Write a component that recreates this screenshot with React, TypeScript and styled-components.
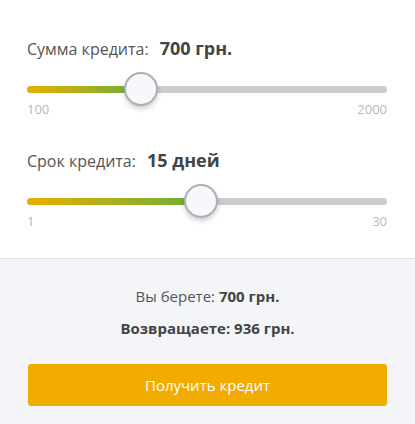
import React from "react";
import styled, { createGlobalStyle } from "styled-components";

const Global = createGlobalStyle`
  html, body { margin: 0; padding: 0; background: #fff; }
  body { font-family: "Open Sans", "Liberation Sans", sans-serif; }
`;

const Page = styled.div`
  width: 415px;
  height: 424px;
  display: flex;
  flex-direction: column;
`;

const Top = styled.div`
  padding: 36px 28px 29px 27px;
  display: flex;
  flex-direction: column;
  border-bottom: 1px solid #e2e4e8;
`;

const Section = styled.div<{ $gap?: number }>`
  display: flex;
  flex-direction: column;
  margin-top: ${(p) => p.$gap ?? 0}px;
`;

const LabelRow = styled.div`
  display: flex;
  align-items: baseline;
  height: 24px;
  line-height: 24px;
`;

const Label = styled.span`
  font-size: 16px;
  color: #555;
  margin-right: 11px;
`;

const Value = styled.span`
  font-size: 18px;
  font-weight: 700;
  color: #444;
`;

const SliderBox = styled.div<{ $top: number }>`
  position: relative;
  height: 24px;
  margin-top: ${(p) => p.$top}px;
  display: flex;
  align-items: center;
`;

const Track = styled.div`
  width: 100%;
  height: 7px;
  border-radius: 4px;
  background: #cccccc;
  position: relative;
`;

const Fill = styled.div`
  position: absolute;
  left: 0;
  top: 0;
  bottom: 0;
  border-radius: 4px 0 0 4px;
  background: linear-gradient(to right, #e8b000, #6aaf3c);
`;

const Thumb = styled.div`
  position: absolute;
  top: 50%;
  width: 30px;
  height: 30px;
  border-radius: 50%;
  background: #f7f8fb;
  border: 2px solid #aeb0b4;
  transform: translate(-50%, -50%);
  box-shadow: 0 3px 5px rgba(0, 0, 0, 0.18);
`;

const Scale = styled.div`
  display: flex;
  justify-content: space-between;
  font-size: 13px;
  line-height: 16px;
  height: 16px;
  color: #b8b8b8;
`;

const Bottom = styled.div`
  flex: 1;
  background: #f4f5f9;
  display: flex;
  flex-direction: column;
  align-items: center;
  padding: 26px 28px 0 28px;
`;

const Line = styled.div<{ $bold?: boolean; $top?: number }>`
  font-size: 15px;
  line-height: 22px;
  color: ${(p) => (p.$bold ? "#444" : "#555")};
  font-weight: ${(p) => (p.$bold ? 700 : 400)};
  margin-top: ${(p) => p.$top ?? 0}px;
  b { font-weight: 700; color: #444; }
`;

const Button = styled.button`
  margin-top: 25px;
  width: 100%;
  height: 42px;
  border: none;
  border-radius: 3px;
  background: #f2ab00;
  color: #fff;
  font-family: "Open Sans", "Liberation Sans", sans-serif;
  font-size: 15px;
  cursor: pointer;
`;

function Slider({ min, max, value, top }: { min: number; max: number; value: number; top: number }) {
  const pct = ((value - min) / (max - min)) * 100;
  return (
    <>
      <SliderBox $top={top}>
        <Track>
          <Fill style={{ width: `${pct}%` }} />
        </Track>
        <Thumb style={{ left: `${pct}%` }} />
      </SliderBox>
      <Scale>
        <span>{min}</span>
        <span>{max}</span>
      </Scale>
    </>
  );
}

export default function App() {
  return (
    <Page>
      <Global />
      <Top>
        <Section>
          <LabelRow>
            <Label>Сумма кредита:</Label>
            <Value>700 грн.</Value>
          </LabelRow>
          <Slider min={100} max={2000} value={700} top={17} />
        </Section>
        <Section $gap={31}>
          <LabelRow>
            <Label>Срок кредита:</Label>
            <Value>15 дней</Value>
          </LabelRow>
          <Slider min={1} max={30} value={15} top={17} />
        </Section>
      </Top>
      <Bottom>
        <Line>
          Вы берете: <b>700 грн.</b>
        </Line>
        <Line $bold $top={10}>
          Возвращаете: 936 грн.
        </Line>
        <Button>Получить кредит</Button>
      </Bottom>
    </Page>
  );
}
